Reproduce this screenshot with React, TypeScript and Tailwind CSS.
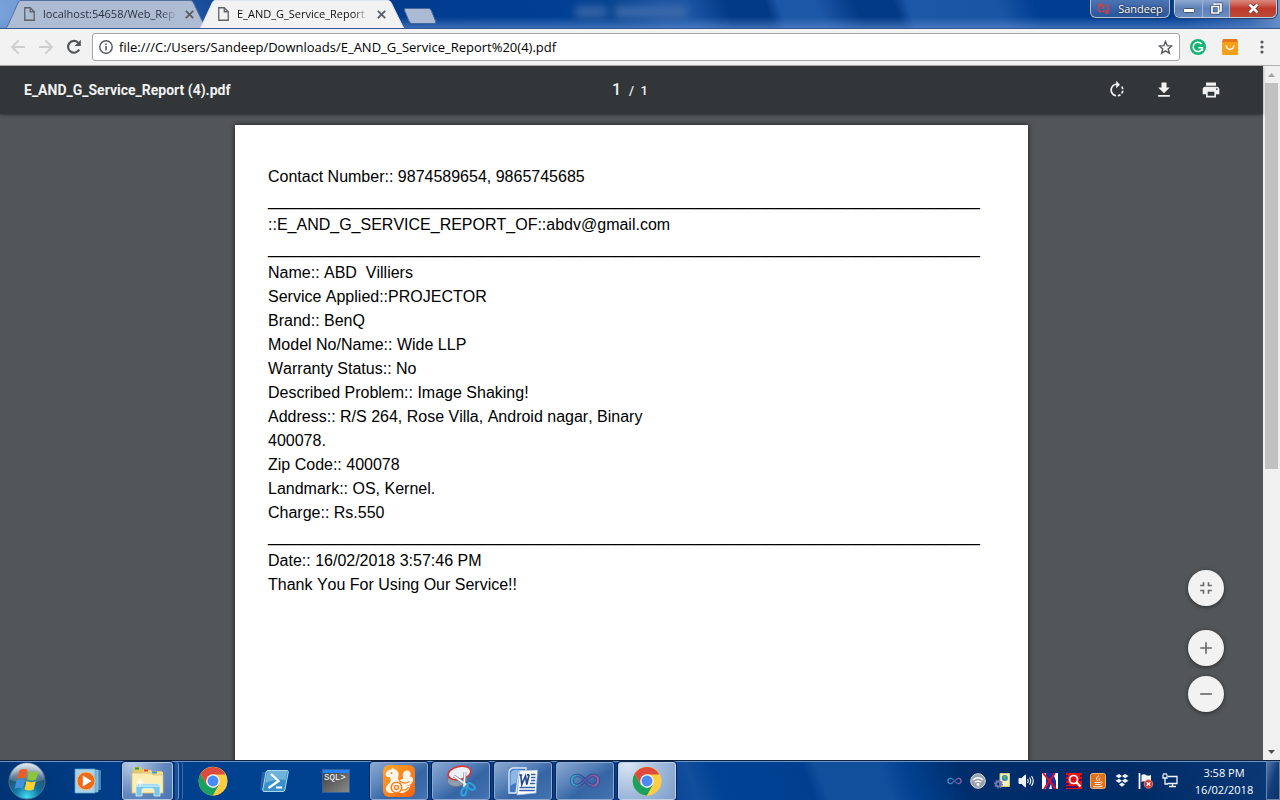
import type { ReactNode } from "react";

const reportLines = [
  "Contact Number:: 9874589654, 9865745685",
  "________________________________________________________________________________",
  "::E_AND_G_SERVICE_REPORT_OF::abdv@gmail.com",
  "________________________________________________________________________________",
  "Name:: ABD  Villiers",
  "Service Applied::PROJECTOR",
  "Brand:: BenQ",
  "Model No/Name:: Wide LLP",
  "Warranty Status:: No",
  "Described Problem:: Image Shaking!",
  "Address:: R/S 264, Rose Villa, Android nagar, Binary",
  "400078.",
  "Zip Code:: 400078",
  "Landmark:: OS, Kernel.",
  "Charge:: Rs.550",
  "________________________________________________________________________________",
  "Date:: 16/02/2018 3:57:46 PM",
  "Thank You For Using Our Service!!",
];

function FileIcon() {
  return (
    <svg width="11" height="14" viewBox="0 0 11 14" fill="none" stroke="#5f6368" className="shrink-0">
      <path d="M.75 .75h5.5l4 4v8.5h-9.5z" strokeWidth="1.3" />
      <path d="M6.25 .75v4h4" strokeWidth="1.3" />
    </svg>
  );
}

function CloseIcon() {
  return (
    <svg width="9" height="9" viewBox="0 0 9 9" stroke="#5a5e66" strokeWidth="1.8">
      <path d="M.8 .8l7.4 7.4M8.2 .8L.8 8.2" />
    </svg>
  );
}

function Tab({ title, active }: { title: string; active: boolean }) {
  return (
    <div
      className={
        active
          ? "relative z-10 -ml-1.5 flex h-7 w-[204px] items-center px-[18px]"
          : "relative flex h-7 w-[200px] items-center pr-3 pl-[18px]"
      }
    >
      <svg className="absolute inset-0 h-full w-full" viewBox="0 0 200 28" preserveAspectRatio="none">
        <path
          d="M0 28L1.500 26L12 3C13 1 13.500 .5 15 .5H184C185.500 .5 186.500 1 187.500 3L198.500 26L200 28z"
          fill={active ? "#f2f2f2" : "#adbbd3"}
        />
        <path
          d="M0 28L1.500 26L12 3C13 1 13.500 .5 15 .5H184C185.500 .5 186.500 1 187.500 3L198.500 26L200 28"
          fill="none"
          stroke={active ? "#dfe5ee" : "#52719f"}
        />
      </svg>
      <div className="relative flex min-w-0 flex-1 items-center gap-2">
        <FileIcon />
        <a
          href="#report"
          className={
            active
              ? "min-w-0 flex-1 text-[11px] leading-4 whitespace-nowrap text-[#111] [mask-image:linear-gradient(to_right,black_88%,transparent)]"
              : "min-w-0 flex-1 text-[11px] leading-4 whitespace-nowrap text-[#2b3242] [mask-image:linear-gradient(to_right,black_88%,transparent)]"
          }
        >
          {title}
        </a>
        <button aria-label="Close tab">
          <CloseIcon />
        </button>
      </div>
    </div>
  );
}

function TitleBar() {
  return (
    <header className="relative flex h-[29px] items-end justify-between border-b border-[#33598f] bg-[linear-gradient(to_bottom,transparent_60%,#5f8ccf99),linear-gradient(70deg,#7ba3db_0%,#5d8aca_8%,#2f63b0_13%,#04398a_20%,#003f94_44%,#04438f_48%,#1b55a4_52%,#1b55a4_54%,#023a86_57%,#023a86_60%,#1c56a6_61%,#1c56a6_64%,#023a86_67%,#023a86_70%,#1c56a6_71%,#1a54a4_78%,#003e92_81%,#003e92_92%,#2d5ea8_97%,#7a9ac9_100%)]">
      <div className="absolute top-1.5 left-[575px] flex gap-2 blur-[4px]">
        <div className="h-3 w-8 bg-[#3563a5]" />
        <div className="h-3 w-[72px] bg-[#3d6aaa]" />
      </div>
      <div className="flex items-end pl-[6px]">
        <Tab title="localhost:54658/Web_Rep" active={false} />
        <Tab title="E_AND_G_Service_Report" active />
        <button aria-label="New tab" className="mb-1">
          <svg width="33" height="16" viewBox="0 0 33 16">
            <path d="M1.500 .5H24C26 .5 26.500 1 27.500 3L31.500 13C32 15 31.500 15.500 30 15.500H9C7 15.500 6 15 5 13L.8 3C.3 1 .5 .5 1.500 .5z" fill="#abbbd5" stroke="#47689c" />
          </svg>
        </button>
      </div>
      <div className="flex items-start gap-1 self-start pr-[3px]">
        <button className="flex h-[18px] w-20 items-center justify-center gap-2 rounded-b-md border border-t-0 border-[#aebfda] bg-linear-to-b from-[#4b74b4] to-[#2b559a] text-[11px] leading-4 text-white shadow-[0_0_0_1px_#17376b] [text-shadow:0_0_2px_#000]">
          <svg width="13" height="11" viewBox="0 0 13 11" fill="none" stroke="#d8403c" strokeWidth="1.300">
            <path d="M4.300 9.300C1 8.500 .3 3.500 3.600 1.800M1.200 1h2.900v3M8.700 1.700C12 2.500 12.700 7.500 9.400 9.200M11.800 10H8.900V7" />
            <path d="M6.500 2v4M6.500 7.300v1.700" strokeWidth="1.600" />
          </svg>
          Sandeep
        </button>
        <div className="flex h-[18px] overflow-hidden rounded-b-md border border-t-0 border-[#c3cfe2] shadow-[0_0_0_1px_#24406f]">
          <button aria-label="Minimize" className="flex w-7 items-center justify-center border-r border-[#9fb2d1] bg-linear-to-b from-[#8fa9d1] via-[#5c80b8] to-[#6c8dc1]">
            <svg width="12" height="6" viewBox="0 0 12 6" className="mt-1">
              <rect x=".5" y=".5" width="11" height="4" rx="1" fill="#fff" stroke="#4b5568" />
            </svg>
          </button>
          <button aria-label="Restore" className="flex w-[27px] items-center justify-center border-r border-[#9fb2d1] bg-linear-to-b from-[#8fa9d1] via-[#5c80b8] to-[#6c8dc1]">
            <svg width="13" height="13" viewBox="0 0 13 13" fill="none">
              <path d="M4.500 2h6.500v7H9M2 4.500h6.500V11H2z" stroke="#354868" strokeWidth="3" />
              <path d="M4.500 3V2h6.500v7H9.500M2 4.500h6.500V11H2z" stroke="#fff" strokeWidth="1.700" />
            </svg>
          </button>
          <button aria-label="Close" className="flex w-[46px] items-center justify-center bg-linear-to-b from-[#d98a80] via-[#c0392b] to-[#b94a36]">
            <svg width="13" height="11" viewBox="0 0 13 11">
              <path d="M2.500 1.500L10.500 9.500M10.500 1.500L2.500 9.500" stroke="#6b3433" strokeWidth="4" />
              <path d="M2.500 1.500L10.500 9.500M10.500 1.500L2.500 9.500" stroke="#fff" strokeWidth="2.600" />
            </svg>
          </button>
        </div>
      </div>
    </header>
  );
}

function AddressBar() {
  return (
    <nav className="flex h-[37px] items-center border-b border-[#b3b3b3] bg-[#f2f2f2] px-2.5">
      <div className="flex w-[82px] items-center gap-3">
        <button aria-label="Back" disabled>
          <svg width="16" height="16" viewBox="0 0 16 16" fill="none" stroke="#cfcfcf" strokeWidth="1.900">
            <path d="M15 8H2.500M8.500 1.500L2 8l6.500 6.500" />
          </svg>
        </button>
        <button aria-label="Forward" disabled>
          <svg width="16" height="16" viewBox="0 0 16 16" fill="none" stroke="#cfcfcf" strokeWidth="1.900">
            <path d="M1 8h12.500M7.500 1.500L14 8l-6.500 6.500" />
          </svg>
        </button>
        <button aria-label="Reload">
          <svg width="16" height="16" viewBox="0 0 16 16">
            <path d="M13.200 10.500A5.900 5.900 0 1 1 12.200 3.700" fill="none" stroke="#505357" strokeWidth="2.100" />
            <path d="M14.800 .8V7H8.600z" fill="#505357" />
          </svg>
        </button>
      </div>
      <div className="flex h-7 flex-1 items-center rounded-[3px] border border-[#a6a6a6] bg-white px-1.5">
        <svg width="14" height="14" viewBox="0 0 14 14" className="shrink-0">
          <circle cx="7" cy="7" r="6.200" fill="none" stroke="#55585c" strokeWidth="1.400" />
          <path d="M7 6v4.500M7 3.400v1.600" stroke="#55585c" strokeWidth="1.600" />
        </svg>
        <input
          aria-label="Address"
          defaultValue="file:///C:/Users/Sandeep/Downloads/E_AND_G_Service_Report%20(4).pdf"
          className="min-w-0 flex-1 bg-transparent pl-1.5 text-[13px] leading-5 text-black outline-none [font-kerning:none]"
        />
        <button aria-label="Bookmark">
          <svg width="15" height="15" viewBox="0 0 15 15" fill="none" stroke="#55585c" strokeWidth="1.400">
            <path d="M7.500 1.500l1.700 4.200 4.500.3-3.500 2.900 1.200 4.400-3.900-2.400-3.900 2.400 1.200-4.400L1.300 6l4.500-.3z" />
          </svg>
        </button>
      </div>
      <div className="flex items-center gap-4 pl-2.5">
        <button aria-label="Grammar checker">
          <svg width="16" height="16" viewBox="0 0 16 16">
            <circle cx="8" cy="8" r="8" fill="#15b374" />
            <path d="M11.600 5A4.700 4.700 0 1 0 12.400 9.200M8.400 8.700h4v3.300" fill="none" stroke="#fff" strokeWidth="1.500" />
          </svg>
        </button>
        <button aria-label="Shopping">
          <svg width="16" height="16" viewBox="0 0 16 16">
            <path d="M1 0h14l1 3H0z" fill="#e5781c" />
            <path d="M0 3h16v12a1 1 0 0 1-1 1H1a1 1 0 0 1-1-1z" fill="#f9a01b" />
            <path d="M4.300 6.500c0 5 7.400 5 7.400 0" fill="none" stroke="#fff" strokeWidth="1.300" />
          </svg>
        </button>
        <button aria-label="Menu" className="flex w-4 justify-center">
          <svg width="4" height="14" viewBox="0 0 4 14" fill="#55585c">
            <circle cx="2" cy="2" r="1.600" />
            <circle cx="2" cy="7" r="1.600" />
            <circle cx="2" cy="12" r="1.600" />
          </svg>
        </button>
      </div>
    </nav>
  );
}

function ToolIcon({ label, d }: { label: string; d: string }) {
  return (
    <button aria-label={label}>
      <svg width="20" height="20" viewBox="0 0 24 24" fill="#f1f1f1">
        <path d={d} />
      </svg>
    </button>
  );
}

function ZoomButton({ label, d }: { label: string; d: string }) {
  return (
    <button aria-label={label} className="flex size-9 items-center justify-center rounded-full bg-[#f2f2f2] shadow-[0_1px_4px_rgba(0,0,0,0.5)]">
      <svg width="20" height="20" viewBox="0 0 24 24" fill="#6a6a6a">
        <path d={d} />
      </svg>
    </button>
  );
}

function PdfViewer() {
  return (
    <main className="flex min-h-0 flex-1">
      <section className="relative flex min-w-0 flex-1 flex-col bg-[#525659]">
        <div className="z-10 grid h-12 shrink-0 grid-cols-[1fr_auto_1fr] items-center bg-[#323639] pr-[42px] pl-6 font-[Roboto,sans-serif] text-[#f1f1f1] shadow-[0_1px_3px_rgba(0,0,0,0.4)]">
          <h1 className="text-[14px] leading-5 font-bold">E_AND_G_Service_Report (4).pdf</h1>
          <div className="flex items-baseline gap-2 pl-3">
            <input aria-label="Page number" defaultValue="1" className="w-3 bg-transparent text-right text-[16px] leading-5 font-medium outline-none" />
            <span className="text-[13px] leading-5 font-medium">/&nbsp; 1</span>
          </div>
          <div className="flex justify-end gap-[27px]">
            <ToolIcon
              label="Rotate clockwise"
              d="M15.550 5.550L11 1v3.070C7.060 4.560 4 7.920 4 12s3.050 7.440 7 7.930v-2.020c-2.840-.48-5-2.940-5-5.910s2.160-5.430 5-5.910V10l4.550-4.450zM19.930 11c-.17-1.390-.72-2.730-1.620-3.890l-1.420 1.420c.54.75.88 1.600 1.020 2.470h2.020zM13 17.900v2.020c1.390-.17 2.740-.71 3.900-1.610l-1.440-1.440c-.75.54-1.590.89-2.460 1.030zm3.890-2.420l1.420 1.410c.9-1.160 1.450-2.500 1.620-3.890h-2.020c-.14.87-.48 1.720-1.020 2.480z"
            />
            <ToolIcon label="Download" d="M19 9h-4V3H9v6H5l7 7 7-7zM5 18v2h14v-2H5z" />
            <ToolIcon
              label="Print"
              d="M19 8H5c-1.660 0-3 1.340-3 3v6h4v4h12v-4h4v-6c0-1.660-1.340-3-3-3zm-3 11H8v-5h8v5zm3-7c-.55 0-1-.45-1-1s.45-1 1-1 1 .45 1 1-.45 1-1 1zm-1-9H6v4h12V3z"
            />
          </div>
        </div>
        <div className="flex min-h-0 flex-1 justify-center overflow-hidden pt-[11px]">
          <article
            id="report"
            className="h-[1122px] w-[793px] max-w-full shrink-0 bg-white px-[33px] pt-10 font-['Liberation_Sans',Arial,sans-serif] text-[16px] leading-6 text-black shadow-[0_0_5px_rgba(0,0,0,0.7)] [font-kerning:none]"
          >
            {reportLines.map((line, i) => (
              <p key={i} className="whitespace-pre">
                {line}
              </p>
            ))}
          </article>
        </div>
        <div className="absolute right-[39px] bottom-12 flex flex-col">
          <ZoomButton label="Fit to page" d="M5 16h3v3h2v-5H5v2zm3-8H5v2h5V5H8v3zm6 11h2v-3h3v-2h-5v5zm2-11V5h-2v5h5V8h-3z" />
          <div className="mt-6 flex flex-col gap-2.5">
            <ZoomButton label="Zoom in" d="M19 13h-6v6h-2v-6H5v-2h6V5h2v6h6v2z" />
            <ZoomButton label="Zoom out" d="M19 13H5v-2h14v2z" />
          </div>
        </div>
      </section>
      <div className="flex w-[17px] flex-col items-center bg-[#f0f0f0]" aria-hidden="true">
        <div className="flex h-[17px] items-center">
          <svg width="7" height="4" viewBox="0 0 7 4">
            <path d="M3.500 0L7 4H0z" fill="#a3a3a3" />
          </svg>
        </div>
        <div className="min-h-0 w-full flex-1 px-0.5">
          <div className="h-[58.500%] w-full bg-[#c1c1c1]" />
        </div>
        <div className="flex h-[17px] items-center">
          <svg width="7" height="4" viewBox="0 0 7 4">
            <path d="M0 0h7L3.500 4z" fill="#505050" />
          </svg>
        </div>
      </div>
    </main>
  );
}

function ChromeIcon() {
  return (
    <svg width="30" height="30" viewBox="0 0 48 48">
      <circle cx="24" cy="24" r="23" fill="#ffcd42" />
      <path d="M4.100 12.500A23 23 0 0 0 24 47L34 29.500 24 24 14 29.500z" fill="#1aa15f" />
      <path d="M24 47A23 23 0 0 0 43.900 12.500H24L34 29.700z" fill="#ffcd42" />
      <path d="M4.100 12.500L14 29.700 24 13.500H43.900A23 23 0 0 0 4.100 12.500z" fill="#dd4b3e" />
      <circle cx="24" cy="24" r="11" fill="#f4f4f4" />
      <circle cx="24" cy="24" r="8.700" fill="#4a8af4" />
    </svg>
  );
}

function StartOrb() {
  return (
    <svg width="38" height="38" viewBox="0 0 38 38">
      <defs>
        <radialGradient id="orb" cx=".5" cy=".95" r=".9">
          <stop offset="0" stopColor="#3fe0f5" />
          <stop offset=".4" stopColor="#1273a3" />
          <stop offset=".75" stopColor="#28506f" />
          <stop offset="1" stopColor="#9db6c8" />
        </radialGradient>
        <linearGradient id="orbShine" x1="0" y1="0" x2="0" y2="1">
          <stop offset="0" stopColor="#fff" stopOpacity=".65" />
          <stop offset="1" stopColor="#fff" stopOpacity=".12" />
        </linearGradient>
      </defs>
      <circle cx="19" cy="19" r="18" fill="url(#orb)" stroke="#4b7696" />
      <path d="M2 18a17 17 0 0 1 34 0q-17 6-34 0z" fill="url(#orbShine)" />
      <path d="M11.500 8.500q3.500-2.500 8-.6l-2 8.600q-4-2-8.500 .6z" fill="#ee5c25" />
      <path d="M21 9q4.500 2.200 9.500 0l-2.300 8.500q-4.500 2.300-9-.2z" fill="#8cc63e" />
      <path d="M8.500 18.700q4-2.500 8.500-.6L15 26.500q-4-2-8.500 .6z" fill="#3f93dc" />
      <path d="M18.500 19q4.500 2.200 9.300 .2L25.700 27.500q-4.700 2.300-9.200-.2z" fill="#fdd12e" />
    </svg>
  );
}

function MediaPlayerIcon() {
  return (
    <svg width="28" height="28" viewBox="0 0 28 28">
      <path d="M8 3h19v20H8z" fill="#3c86bd" />
      <path d="M5 3h19v22H5z" fill="#78b7dd" stroke="#a8d5ee" strokeWidth=".6" />
      <path d="M1 2h20v24H1z" fill="#a9d3ea" stroke="#5ba0cc" strokeWidth=".7" />
      <circle cx="12" cy="14" r="9" fill="#ef6c16" stroke="#f9c08c" />
      <path d="M8.800 8.500v11l8.700-5.500z" fill="#fff" />
    </svg>
  );
}

function ExplorerIcon() {
  return (
    <svg width="34" height="32" viewBox="0 0 34 32">
      <path d="M2 4l1-2h7l1 2h6l1 2h13v21H2z" fill="#e5c869" />
      <path d="M12 5h8l1 2h11v19H12z" fill="#f4dc8b" />
      <path d="M4 2.500h4v2H4z" fill="#18a34a" />
      <path d="M13 4.500h4v2h-4z" fill="#e04b38" />
      <path d="M21 6.500h5v2h-5z" fill="#2f9ae0" />
      <path d="M1 8h20l1 2h10v18H1z" fill="#fbeeb5" stroke="#dcc06c" strokeWidth=".8" />
      <path d="M5 31V22q0-3 3-3h18q3 0 3 3v9h-6v-6q0-1.500-2-1.500h-8q-2 0-2 1.500v6z" fill="#7ac9e8" stroke="#d6f2fb" strokeWidth=".8" />
      <path d="M6 21h22" stroke="#c8edf8" strokeWidth="1.500" />
      <path d="M9 13v8M5 17h8M6.500 14.500l5 5M11.500 14.500l-5 5" stroke="#fff" strokeWidth=".8" />
    </svg>
  );
}

function PowerShellIcon() {
  return (
    <svg width="30" height="24" viewBox="0 0 30 24">
      <path d="M2 3h6L5 21H0z" fill="#4b8ac5" opacity=".45" />
      <path d="M8 1.500h19q1.500 0 1.300 1.500l-3.500 18q-.3 1.500-1.800 1.500H4q-1.500 0-1.200-1.500L6 3q.3-1.500 2-1.500z" fill="#398fc9" stroke="#a9d7ef" />
      <path d="M8 2h19l-1.500 9Q15 9 5 14L7 3z" fill="#94cce7" opacity=".6" />
      <path d="M11 5l7.500 7L8.500 19" fill="none" stroke="#fff" strokeWidth="2.300" />
      <path d="M16 18.500h6" stroke="#fff" strokeWidth="2" />
    </svg>
  );
}

function SqlIcon() {
  return (
    <div className="flex h-6 w-7 flex-col border border-[#315f9e] bg-linear-to-br from-[#3f3f3f] to-[#8b8b8b]">
      <div className="h-[3px] shrink-0 bg-[#2583ff]" />
      <span className="pl-px font-['Liberation_Mono',monospace] text-[9px] leading-[10px] text-white">SQL&gt;</span>
    </div>
  );
}

function SquirrelIcon() {
  return (
    <svg width="32" height="32" viewBox="0 0 32 32">
      <defs>
        <linearGradient id="uc" x1="0" y1="0" x2="1" y2="1">
          <stop offset="0" stopColor="#ffa62b" />
          <stop offset="1" stopColor="#f9600d" />
        </linearGradient>
      </defs>
      <rect width="32" height="32" rx="6" fill="url(#uc)" />
      <path
        d="M2.500 9.500C3 6 6 4.500 8.500 4.500L9.500 2.500L11.300 4.300C14.500 5 16 7.500 15.500 10.500C15 13 14.700 14 16 15.500C18 14 19.500 14.500 20.500 13.500C18.500 9.500 20.500 5 24.500 5.500C28 6 28.500 10 26.500 12C29.500 11 31 14 29.500 17C28 20 25.500 20 23.500 20.500C25 21 26.500 20.500 27.500 20C27 24 23.500 27.500 19 28H7.500C4 28 2.500 25.500 3.200 22.500C3.800 20 6.500 18.500 7.500 16.500C8.200 15 7.500 13.500 6.800 12.200C5 12.300 3 11.500 2.500 9.500z"
        fill="#fff6ea"
      />
      <path d="M16 15.500C19 18.500 22 19.500 26.500 16.500M18.500 25C22 25.500 24.500 24 25.500 22" fill="none" stroke="#f98320" strokeWidth="1.300" />
      <circle cx="13.500" cy="22.500" r="5.300" fill="#fff6ea" stroke="#f98320" strokeWidth="1.500" />
      <circle cx="13.500" cy="22.500" r="2" fill="none" stroke="#f98320" strokeWidth="1.500" />
      <circle cx="8.500" cy="8" r=".9" fill="#f98320" />
    </svg>
  );
}

function SnipIcon() {
  return (
    <svg width="32" height="32" viewBox="0 0 32 32">
      <ellipse cx="12" cy="15" rx="10" ry="6.500" fill="#8e9db2" stroke="#6f7784" transform="rotate(-8 12 15)" />
      <ellipse cx="14.500" cy="8" rx="11.500" ry="6.500" fill="#edf1f7" stroke="#d83a3c" strokeWidth="1.700" transform="rotate(-12 14.500 8)" />
      <path d="M9 11L23 21M20 7l-1 15" stroke="#77838f" strokeWidth="2.800" />
      <path d="M9 11L23 21M20 7l-1 15" stroke="#eef2f6" strokeWidth="1.600" />
      <ellipse cx="26" cy="21.500" rx="4.300" ry="2.500" fill="none" stroke="#2aa5dd" strokeWidth="2" transform="rotate(35 26 21.500)" />
      <ellipse cx="19" cy="26.500" rx="2.300" ry="4.200" fill="none" stroke="#2aa5dd" strokeWidth="2" transform="rotate(20 19 26.500)" />
    </svg>
  );
}

function WordIcon() {
  return (
    <svg width="32" height="30" viewBox="0 0 32 30">
      <path d="M6 2h13v3h-7L9 27H2V7q0-4 4-5z" fill="#3e78c4" stroke="#dceafa" strokeWidth="1.400" />
      <path d="M3.500 8q.5-4 4-4.300H12L9 17q-3 .5-5.500 3z" fill="#8db6e6" />
      <path d="M12.500 5L30.500 4L29 27L10 29z" fill="#fff" stroke="#9db8dc" strokeWidth=".7" />
      <path d="M12.300 9h3M20 8.800h2.500M13.800 9l1 9.500L18.500 10l1.300 8.500L22 9" fill="none" stroke="#24478f" strokeWidth="1.700" />
      <path d="M24 8.500h4.500M24 11.500h4.500M24 14.500h4.300M23 17.500h5.200M12.500 21.500h15.500M12.200 24.500h15.500" stroke="#355fae" strokeWidth="1.300" />
    </svg>
  );
}

function InfinityIcon({ width, height, id }: { width: number; height: number; id: string }) {
  const loop =
    "M16 8C13 4 10.500 2.500 7.500 2.500C4 2.500 2 5 2 8C2 11.500 4.500 13.500 7.500 13.500C14 13.500 18 2.500 24.500 2.500C27.500 2.500 30 4.500 30 8C30 11.500 27.500 13.500 24.500 13.500C21.500 13.500 19 12 16 8z";
  return (
    <svg width={width} height={height} viewBox="0 0 32 16" fill="none">
      <defs>
        <linearGradient id={id} x1="0" y1="0" x2="1" y2="0">
          <stop offset="0" stopColor="#35a6cf" />
          <stop offset=".5" stopColor="#4a55a8" />
          <stop offset="1" stopColor="#9a62ad" />
        </linearGradient>
      </defs>
      <path d={loop} stroke="#26366f" strokeWidth="3.600" />
      <path d={loop} stroke={`url(#${id})`} strokeWidth="2.600" />
    </svg>
  );
}

function TaskButton({ label, state, children }: { label: string; state: "open" | "active"; children: ReactNode }) {
  return (
    <button
      aria-label={label}
      className={
        state === "active"
          ? "flex h-[38px] w-[58px] items-center justify-center rounded-[3px] border border-[#c0d0e6] bg-[radial-gradient(circle_at_15%_0%,#dbe6f4,#9fb9db_55%,#7f9fcb)] shadow-[0_0_0_1px_#0a2450]"
          : "flex h-[38px] w-[58px] items-center justify-center rounded-[3px] border border-[#8eaad3] bg-[linear-gradient(145deg,#8aa8d1_0%,#5b84bb_35%,#3565a5_60%,#4673b0_100%)] shadow-[0_0_0_1px_#0a2450]"
      }
    >
      {children}
    </button>
  );
}

function TrayItem({ label, children }: { label: string; children: ReactNode }) {
  return (
    <button aria-label={label} className="flex w-6 items-center justify-center">
      {children}
    </button>
  );
}

function Tray() {
  return (
    <div className="flex items-center">
      <TrayItem label="Visual Studio">
        <InfinityIcon id="vsTray" width={15} height={8} />
      </TrayItem>
      <TrayItem label="Wireless">
        <svg width="16" height="16" viewBox="0 0 16 16" fill="none">
          <circle cx="8" cy="8" r="7.300" fill="#9aa1ab" stroke="#d8dbdf" />
          <path d="M3 7q5-4.500 10 0M4.800 9.300q3.200-2.800 6.400 0" stroke="#fff" strokeWidth="1.400" />
          <circle cx="8" cy="11.500" r="1.400" fill="#fff" />
        </svg>
      </TrayItem>
      <TrayItem label="Web service">
        <svg width="16" height="16" viewBox="0 0 16 16">
          <path d="M6 .5h9.500v13H6z" fill="#f5eeb6" stroke="#d4cb7d" />
          <circle cx="10.800" cy="5" r="3" fill="#2c84c9" />
          <path d="M9 4q2-3 3.500 0-1 3-2.500 2z" fill="#62b74f" />
          <circle cx="4.500" cy="11" r="2.500" fill="none" stroke="#7474b8" strokeWidth="2" />
          <circle cx="4.500" cy="11" r="3.900" fill="none" stroke="#7474b8" strokeWidth="1.200" strokeDasharray="1.500 1.500" />
        </svg>
      </TrayItem>
      <TrayItem label="Volume">
        <svg width="16" height="14" viewBox="0 0 16 14" fill="none" stroke="#fff">
          <path d="M1 4.500h2.500L7.500 1v12L3.500 9.500H1z" fill="#eef1f5" />
          <path d="M9.500 5q1.500 2 0 4M11.500 3.500q2.500 3.500 0 7M13.500 2q3.500 5 0 10" strokeWidth="1.100" />
        </svg>
      </TrayItem>
      <TrayItem label="Input monitor">
        <svg width="16" height="16" viewBox="0 0 16 16">
          <path d="M0 0h16v16H0z" fill="#fff" />
          <path d="M4 0h8v3l2 5v8h-4l-1-5-2 5H4V9z" fill="#1c2ba0" />
          <path d="M1 0l13 16M13 0L2 16" stroke="#e0121f" strokeWidth="1.900" />
        </svg>
      </TrayItem>
      <TrayItem label="Search tool">
        <svg width="16" height="16" viewBox="0 0 16 16">
          <path d="M0 0h16v16H0z" fill="#ed1111" />
          <path d="M0 3h2M0 7h2M0 11h3M0 14h12M14 3h2M13 7h3" stroke="#101077" strokeWidth="1.400" />
          <circle cx="7.500" cy="6.500" r="4" fill="#e60c16" stroke="#fff" strokeWidth="1.700" />
          <path d="M10 9l4.500 4.500" stroke="#fff" strokeWidth="2.300" />
        </svg>
      </TrayItem>
      <TrayItem label="Java">
        <svg width="16" height="16" viewBox="0 0 16 16">
          <rect x=".5" y=".5" width="15" height="15" rx="2" fill="#e0701a" stroke="#f4b574" />
          <path d="M9 2.500Q5 5 7.500 8M10.500 5Q8 6.500 9.300 8M4.500 9.500h6M5 11.500h5.500M10.500 9q3-.5 0 2.500M3 13.500q5 1 9.500-.3" fill="none" stroke="#fff" strokeWidth=".9" />
        </svg>
      </TrayItem>
      <TrayItem label="Dropbox">
        <svg width="14" height="13" viewBox="0 0 14 13" fill="#f1f4f8">
          <path d="M4 0l3 2-3 2.300L.5 2zM10 0l3.500 2-3.500 2.300L7 2zM4 4.700l3 2L4 9 .5 6.700zM10 4.700l3.500 2L10 9 7 6.700zM7 8.500l3 2L7 12.700l-3-2.200z" />
        </svg>
      </TrayItem>
      <TrayItem label="Action center">
        <svg width="16" height="16" viewBox="0 0 16 16">
          <path d="M1.500 0v16" stroke="#fff" strokeWidth="1.700" />
          <path d="M3.500 2q2.500-1.500 4.500 0t5 0v7q-3 1.500-5 0t-4.500 0z" fill="#f3f5f8" />
          <circle cx="10.500" cy="11" r="4.300" fill="#d83231" stroke="#f39c93" strokeWidth=".7" />
          <path d="M8.700 9.200l3.600 3.600M12.300 9.200l-3.600 3.600" stroke="#fff" strokeWidth="1.300" />
        </svg>
      </TrayItem>
      <TrayItem label="Network">
        <svg width="16" height="15" viewBox="0 0 16 15" fill="none" stroke="#f1f4f8" strokeWidth="1.300">
          <path d="M6 3.500h9v7H5.500M7 13.500h7M10.500 10.500v3" />
          <path d="M1 1.500v3.500h4V1.500M2 0v2M4 0v2M3 5v6h3" />
        </svg>
      </TrayItem>
    </div>
  );
}

function Taskbar() {
  return (
    <footer className="flex h-10 items-center justify-between border-t border-[#10233e] bg-[linear-gradient(to_bottom,#6d93c8_0,#6d93c8_1px,transparent_1px),linear-gradient(70deg,#003372_0%,#013c86_8%,#00418f_18%,#014094_50%,#114e9c_54%,#014294_56%,#003f90_63%,#114e9c_64%,#114e9c_69%,#01408f_71%,#002e6c_75%,#002c66_88%,#0b3a77_100%)]">
      <div className="flex h-full items-center">
        <button aria-label="Start" className="ml-2 flex">
          <StartOrb />
        </button>
        <button aria-label="Media Player" className="ml-7 flex">
          <MediaPlayerIcon />
        </button>
        <div className="ml-5 flex">
          <button
            aria-label="Windows Explorer"
            className="flex h-[38px] w-[51px] items-center justify-center rounded-[3px] border border-[#b3c6e2] bg-[radial-gradient(circle_at_20%_0%,#b9cbe5,#6287be_60%,#4b75b1)] shadow-[0_0_0_1px_#0a2450]"
          >
            <ExplorerIcon />
          </button>
          <div className="ml-0.5 h-[38px] w-1 rounded-r-[3px] border-r border-[#7392c2] bg-[#1c4f99]" />
          <div className="h-[38px] w-1 rounded-r-[3px] border-r border-[#46699f]" />
        </div>
        <button aria-label="Chrome shortcut" className="ml-[15px] flex">
          <ChromeIcon />
        </button>
        <button aria-label="PowerShell" className="ml-8 flex">
          <PowerShellIcon />
        </button>
        <button aria-label="SQL command line" className="ml-8 flex text-left">
          <SqlIcon />
        </button>
        <div className="ml-5 flex gap-1">
          <TaskButton label="UC Browser" state="open">
            <SquirrelIcon />
          </TaskButton>
          <TaskButton label="Snipping Tool" state="open">
            <SnipIcon />
          </TaskButton>
          <TaskButton label="Word" state="open">
            <WordIcon />
          </TaskButton>
          <TaskButton label="Visual Studio" state="open">
            <InfinityIcon id="vsTask" width={32} height={15} />
          </TaskButton>
          <TaskButton label="Chrome" state="active">
            <ChromeIcon />
          </TaskButton>
        </div>
      </div>
      <div className="flex h-full items-center">
        <Tray />
        <div className="flex w-[84px] flex-col items-center text-[11px] leading-[17px] text-white">
          <time>3:58 PM</time>
          <time>16/02/2018</time>
        </div>
        <button aria-label="Show desktop" className="h-full w-3.5 border border-[#6683ab] bg-linear-to-br from-[#5578a8] via-[#123e7a] to-[#0b3268]" />
      </div>
    </footer>
  );
}

export default function App() {
  return (
    <div className="flex h-screen flex-col overflow-hidden font-['Open_Sans','Noto_Sans',sans-serif]">
      <TitleBar />
      <AddressBar />
      <PdfViewer />
      <Taskbar />
    </div>
  );
}
